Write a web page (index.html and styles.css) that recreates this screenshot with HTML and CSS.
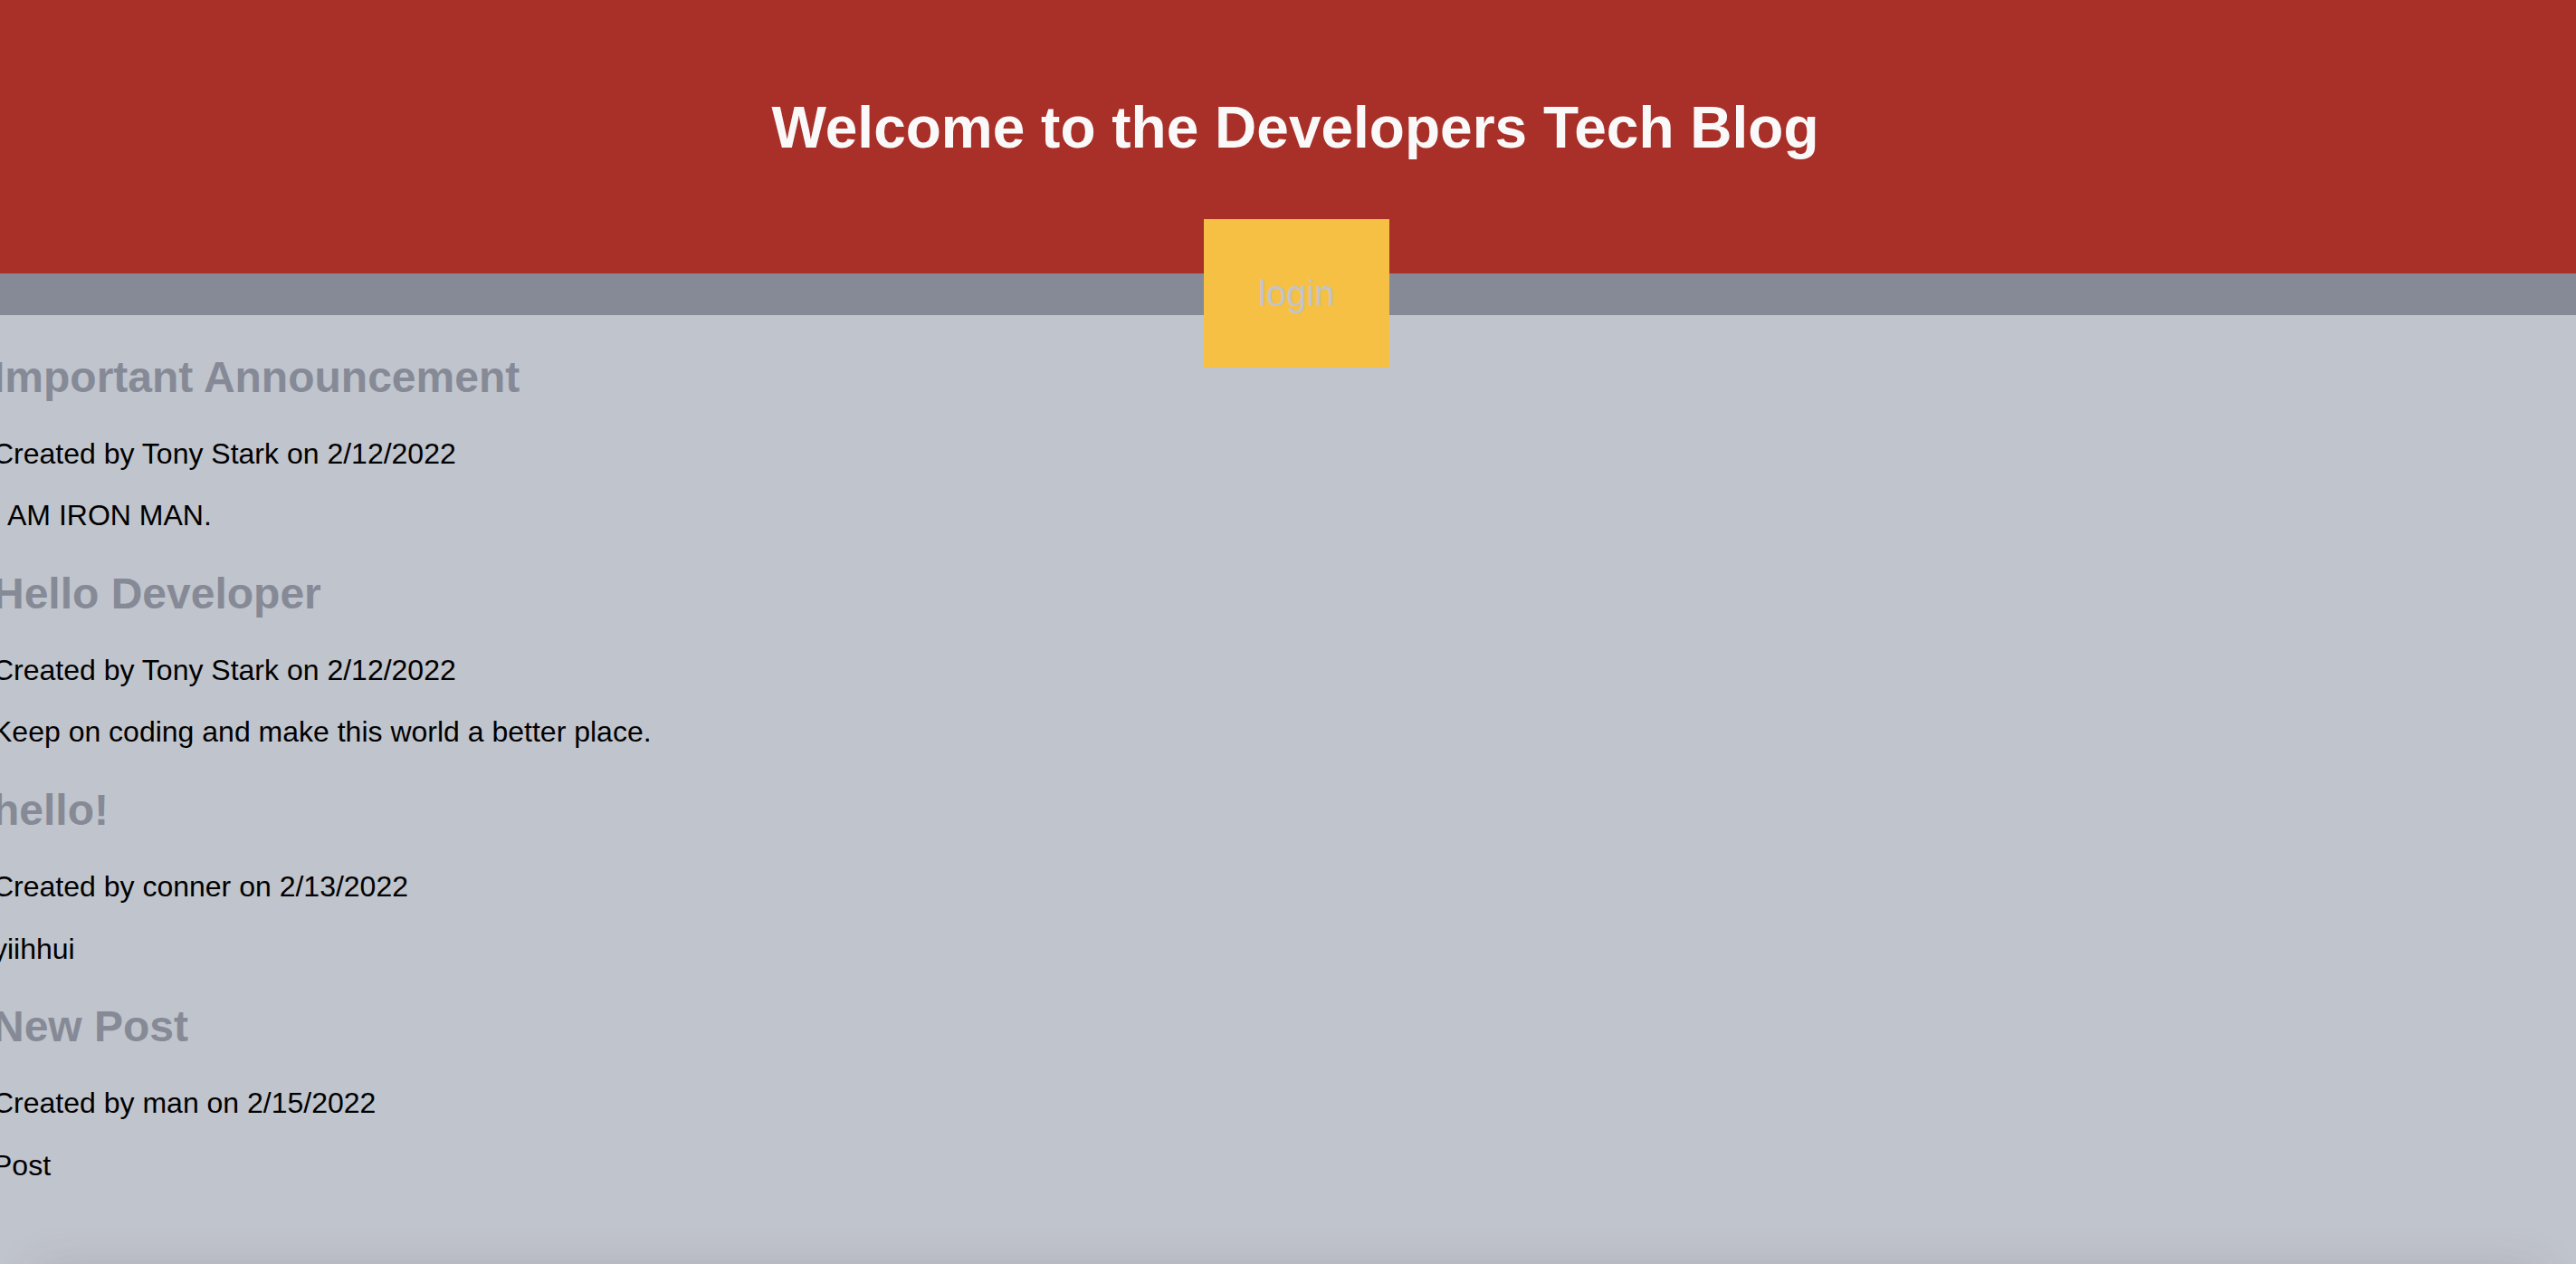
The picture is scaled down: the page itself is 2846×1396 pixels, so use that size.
FILE: index.html
```html
<!DOCTYPE html>
<html lang="en">
<head>
<meta charset="utf-8">
<title>Developers Tech Blog</title>
<link rel="stylesheet" href="styles.css">
</head>
<body>
<header class="site-header">
  <h1 class="site-title">Welcome to the Developers Tech Blog</h1>
  <a class="login-btn" href="#">login</a>
</header>
<nav class="nav-bar"></nav>
<main class="posts">
  <article class="post">
    <h2 class="post-title">Important Announcement</h2>
    <p class="post-meta">Created by Tony Stark on 2/12/2022</p>
    <p class="post-body">I AM IRON MAN.</p>
  </article>
  <article class="post">
    <h2 class="post-title">Hello Developer</h2>
    <p class="post-meta">Created by Tony Stark on 2/12/2022</p>
    <p class="post-body">Keep on coding and make this world a better place.</p>
  </article>
  <article class="post">
    <h2 class="post-title">hello!</h2>
    <p class="post-meta">Created by conner on 2/13/2022</p>
    <p class="post-body">yiihhui</p>
  </article>
  <article class="post">
    <h2 class="post-title">New Post</h2>
    <p class="post-meta">Created by man on 2/15/2022</p>
    <p class="post-body">Post</p>
  </article>
</main>
<footer class="site-footer"></footer>
</body>
</html>
```

FILE: styles.css
```css
html, body {
  margin: 0;
  padding: 0;
}

body {
  background: #c0c4cc;
  font-family: "Liberation Sans", Arial, Helvetica, sans-serif;
  color: #000;
  overflow-x: hidden;
}

.site-header {
  position: relative;
  background: #a92f29;
  padding: 104px 0 124px 16px;
  text-align: center;
}

.site-title {
  margin: 0;
  font-size: 64px;
  line-height: 74px;
  font-weight: bold;
  color: #f9f9f9;
}

.login-btn {
  position: absolute;
  top: 242px;
  left: calc(50% - 93px);
  z-index: 2;
  display: block;
  background: #f5c043;
  color: #c0c4cc;
  font-size: 40px;
  line-height: 46px;
  padding: 59px 60px;
  text-decoration: none;
}

.nav-bar {
  height: 46px;
  background: #868a96;
}

.posts {
  margin-left: -8px;
}

.post-title {
  margin: 40.5px 0 38px;
  font-size: 48px;
  line-height: 56px;
  font-weight: bold;
  color: #868a96;
}

.post-meta,
.post-body {
  margin: 32px 0;
  font-size: 32px;
  line-height: 36.4px;
}

.site-footer {
  margin: 96px 40px 0;
  height: 60px;
  background: #c0c4cc;
  box-shadow: 0 0 50px rgba(60, 64, 80, 0.16);
}
```
